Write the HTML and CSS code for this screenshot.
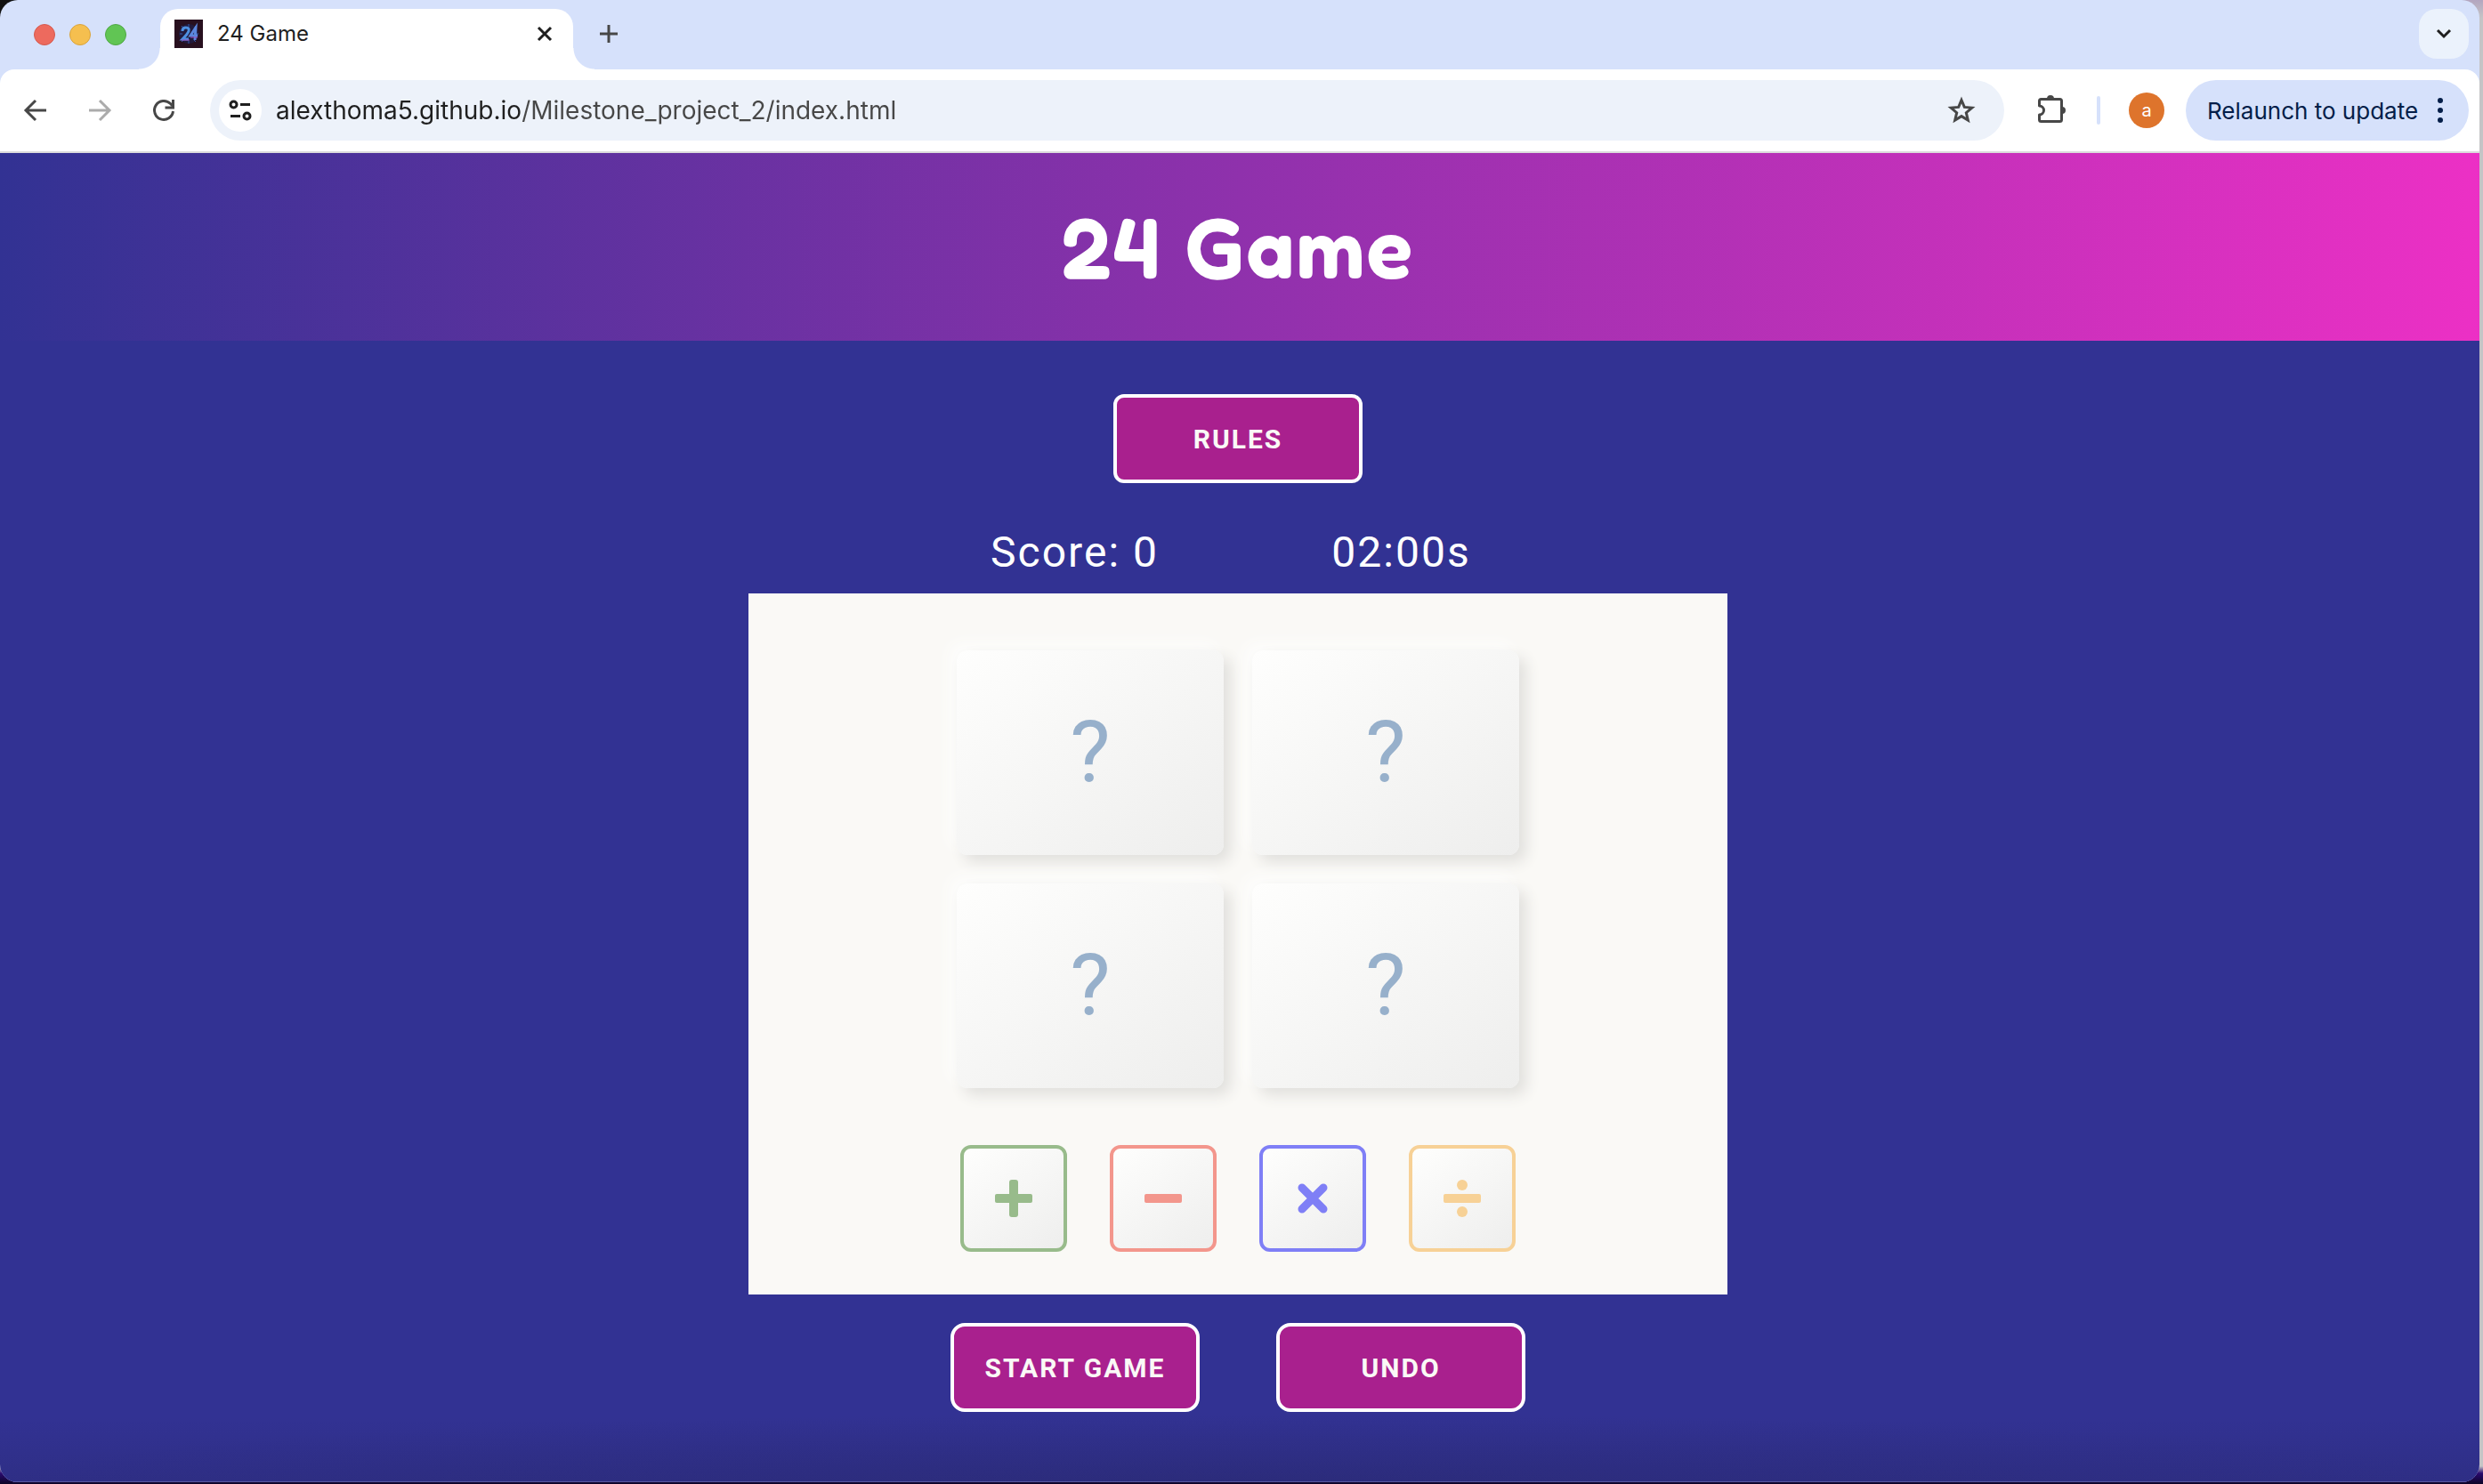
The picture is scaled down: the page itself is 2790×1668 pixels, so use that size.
FILE: index.html
```html
<!DOCTYPE html>
<html lang="en">
<head>
  <meta charset="utf-8">
  <meta name="viewport" content="width=device-width, initial-scale=1">
  <title>24 Game</title>
  <link rel="stylesheet" href="styles.css">
</head>
<body>
  <div class="window">
    <div class="tab-strip">
      <div class="lights">
        <button class="light light-close" type="button" aria-label="Close window"></button>
        <button class="light light-min" type="button" aria-label="Minimise window"></button>
        <button class="light light-max" type="button" aria-label="Maximise window"></button>
      </div>
      <div class="tab">
        <svg class="favicon" viewBox="0 0 32 32" aria-hidden="true">
          <rect width="32" height="32" fill="#28101f"/>
          <circle cx="16" cy="16" r="11" fill="#1c2354" opacity=".55"/>
          <path d="M16 5v3M16 24v3M6 16h3M24 16h3M8 7l2 3M24 7l-2 3M8 25l2-2M24 25l-2-2" stroke="#3558a8" fill="none"/>
          <path d="M9 13q0-4 4-4t3 4q-1 3-7 9h7" stroke="#4d8fe0" stroke-width="3" fill="none"/>
          <path d="M23 23l1-14-6 9h8" stroke="#5b86dc" stroke-width="3" fill="none"/>
          <path d="M8 23h9M18 20h8" stroke="#a44fc0" fill="none"/>
        </svg>
        <span class="tab-title">24 Game</span>
        <button class="icon-btn tab-close" type="button" aria-label="Close tab">
          <svg width="20" height="20" viewBox="0 0 20 20"><path d="M3 3l14 14M17 3L3 17" stroke="#1f1f1f" stroke-width="3" fill="none"/></svg>
        </button>
      </div>
      <button class="icon-btn new-tab" type="button" aria-label="New tab">
        <svg width="24" height="24" viewBox="0 0 24 24"><path d="M12 2v20M2 12h20" stroke="#474747" stroke-width="3" fill="none"/></svg>
      </button>
      <button class="icon-btn tab-search" type="button" aria-label="Search tabs">
        <svg width="20" height="20" viewBox="0 0 20 20"><path d="M3 6l7 7 7-7" stroke="#1f1f1f" stroke-width="3" fill="none"/></svg>
      </button>
    </div>

    <div class="toolbar">
      <div class="nav">
        <button class="icon-btn" type="button" aria-label="Back">
          <svg width="32" height="32" viewBox="0 0 32 32"><path d="M28 16H6M16 5L5 16l11 11" stroke="#474747" stroke-width="3" fill="none"/></svg>
        </button>
        <button class="icon-btn" type="button" aria-label="Forward">
          <svg width="32" height="32" viewBox="0 0 32 32"><path d="M4 16h22M16 5l11 11-11 11" stroke="#ababab" stroke-width="3" fill="none"/></svg>
        </button>
        <button class="icon-btn" type="button" aria-label="Reload">
          <svg width="32" height="32" viewBox="0 0 32 32"><path d="M26.500 17A10.500 10.500 0 1 1 23.500 8.500L26 11" stroke="#474747" stroke-width="3" fill="none"/><path d="M26.500 4v9h-9" stroke="#474747" stroke-width="3" fill="none"/></svg>
        </button>
      </div>
      <div class="omnibox">
        <button class="icon-btn site-info" type="button" aria-label="Site information">
          <svg width="28" height="28" viewBox="0 0 28 28" fill="none" stroke="#1f1f1f" stroke-width="3"><circle cx="6.500" cy="7.500" r="3.500"/><path d="M14 7.500h11M3 20.500h11"/><circle cx="21.500" cy="20.500" r="3.500"/></svg>
        </button>
        <input class="url" type="text" aria-label="Address" value="alexthoma5.github.io/Milestone_project_2/index.html">
        <button class="icon-btn" type="button" aria-label="Bookmark this tab">
          <svg width="32" height="32" viewBox="0 0 32 32"><path d="M16 4.500l3.300 7.900 8.500.7-6.500 5.600 2 8.300L16 22.600 8.700 27l2-8.300-6.500-5.600 8.500-.7z" stroke="#474747" stroke-width="3" fill="none"/></svg>
        </button>
      </div>
      <button class="icon-btn" type="button" aria-label="Extensions">
        <svg width="36" height="36" viewBox="0 0 36 36"><path d="M3.500 7.500q0-2 2-2h21q2 0 2 2v21q0 2-2 2h-21q-2 0-2-2v-5.500a5 5 0 0 0 0-10z" stroke="#474747" stroke-width="3" fill="none" stroke-linejoin="round"/><path d="M12 5a4 4 0 0 1 8 0zM29 14a4 4 0 0 1 0 8z" fill="#474747"/></svg>
      </button>
      <span class="divider"></span>
      <button class="avatar" type="button">a</button>
      <button class="relaunch" type="button">Relaunch to update
        <svg width="8" height="28" viewBox="0 0 8 28" fill="#041e49" aria-hidden="true"><circle cx="4" cy="3" r="3"/><circle cx="4" cy="14" r="3"/><circle cx="4" cy="25" r="3"/></svg>
      </button>
    </div>

    <div class="page">
      <header class="banner"><h1>24 Game</h1></header>
      <main class="game">
        <button class="btn btn-rules" type="button">RULES</button>
        <div class="stats">
          <span>Score: 0</span>
          <span>02:00s</span>
        </div>
        <section class="board" aria-label="Game board">
          <div class="cards">
            <button class="card" type="button">?</button>
            <button class="card" type="button">?</button>
            <button class="card" type="button">?</button>
            <button class="card" type="button">?</button>
          </div>
          <div class="operators">
            <button class="op op-add" type="button" aria-label="Add">
              <svg width="42" height="42" viewBox="0 0 42 42" fill="currentColor"><rect y="16" width="42" height="10" rx="2"/><rect x="16" width="10" height="42" rx="3"/></svg>
            </button>
            <button class="op op-sub" type="button" aria-label="Subtract">
              <svg width="42" height="42" viewBox="0 0 42 42" fill="currentColor"><rect y="16" width="42" height="10" rx="2"/></svg>
            </button>
            <button class="op op-mul" type="button" aria-label="Multiply">
              <svg width="42" height="42" viewBox="0 0 42 42"><path d="M9 9l24 24M33 9L9 33" stroke="currentColor" stroke-width="9" stroke-linecap="round" fill="none"/></svg>
            </button>
            <button class="op op-div" type="button" aria-label="Divide">
              <svg width="42" height="42" viewBox="0 0 42 42" fill="currentColor"><rect y="16" width="42" height="10" rx="2"/><circle cx="21" cy="6" r="6"/><circle cx="21" cy="36" r="6"/></svg>
            </button>
          </div>
        </section>
        <div class="actions">
          <button class="btn" type="button">START GAME</button>
          <button class="btn" type="button">UNDO</button>
        </div>
      </main>
    </div>
  </div>
</body>
</html>
```
FILE: styles.css
```css
* {
  box-sizing: border-box;
}

body {
  margin: 0;
  background:
    linear-gradient(#111, #111) 0 0 / 20px 20px no-repeat,
    linear-gradient(#b3a6c0, #c4c4c6 20px, #c4c4c6 calc(100% - 20px), #2a0a6e calc(100% - 12px), #0c0426);
  font-family: Inter, "Liberation Sans", sans-serif;
}

button {
  font: inherit;
  padding: 0;
  border: 0;
  background: none;
  flex: none;
}

.window {
  display: flex;
  flex-direction: column;
  min-height: calc(100vh - 2px);
  margin: 0 4px 2px 0;
  border-radius: 20px;
  overflow: hidden;
  background: #d6e1fb;
}

.icon-btn {
  display: grid;
  place-items: center;
}

/* Tab strip */

.tab-strip {
  display: flex;
  height: 78px;
  padding: 10px 12px 0 38px;
}

.lights {
  display: flex;
  align-items: center;
  gap: 16px;
  padding-bottom: 10px;
}

.light {
  width: 24px;
  height: 24px;
  border: 1px solid;
  border-radius: 50%;
}

.light-close {
  background: #ed6a5e;
  border-color: #d5594e;
}

.light-min {
  background: #f5bf4f;
  border-color: #d9a33c;
}

.light-max {
  background: #61c554;
  border-color: #50a845;
}

.tab {
  position: relative;
  display: flex;
  align-items: center;
  width: 464px;
  margin-left: 38px;
  padding: 0 22px 12px 16px;
  border-radius: 20px 20px 0 0;
  background: #fff;
}

.tab::before,
.tab::after {
  content: "";
  position: absolute;
  bottom: 0;
  width: 24px;
  height: 24px;
}

.tab::before {
  right: 100%;
  background: radial-gradient(circle at 0 0, transparent 23px, #fff 24px);
}

.tab::after {
  left: 100%;
  background: radial-gradient(circle at 100% 0, transparent 23px, #fff 24px);
}

.favicon {
  width: 32px;
  height: 32px;
}

.tab-title {
  flex: 1;
  margin-left: 16px;
  font-size: 24px;
  line-height: 32px;
  color: #1f1f1f;
}

.new-tab {
  height: 56px;
  margin-left: 28px;
}

.tab-search {
  width: 56px;
  height: 56px;
  margin-left: auto;
  border-radius: 20px;
  background: #ebf2fc;
}

/* Toolbar */

.toolbar {
  display: flex;
  align-items: center;
  height: 94px;
  padding: 0 12px 0 24px;
  border-bottom: 2px solid #dcdcdc;
  border-radius: 16px 16px 0 0;
  background: #fff;
}

.nav {
  display: flex;
  gap: 40px;
}

.omnibox {
  display: flex;
  align-items: center;
  flex: 1;
  height: 68px;
  margin: 0 36px;
  padding: 0 32px 0 10px;
  border-radius: 34px;
  background: #edf2fa;
}

.site-info {
  width: 48px;
  height: 48px;
  border-radius: 50%;
  background: #fff;
}

/* The host part of the address is darker than the path. */
.url {
  flex: 1;
  min-width: 0;
  height: 40px;
  margin-left: 16px;
  padding: 0;
  border: 0;
  font: 28px/40px Inter, "Liberation Sans", sans-serif;
  color: transparent;
  background: linear-gradient(90deg, #1f1f1f 276px, #474747 276px);
  -webkit-background-clip: text;
  background-clip: text;
}

.divider {
  width: 4px;
  height: 32px;
  margin: 0 32px;
  border-radius: 2px;
  background: #d6e1fb;
}

.avatar {
  width: 40px;
  height: 40px;
  border-radius: 50%;
  background: #de742c;
  color: #fff;
  font-size: 20px;
}

.relaunch {
  display: flex;
  align-items: center;
  justify-content: space-between;
  width: 318px;
  height: 68px;
  margin-left: 24px;
  padding: 0 28px 0 24px;
  border-radius: 34px;
  background: #d6e1fb;
  color: #041e49;
  font-size: 26px;
}

/* Game page */

.page {
  flex: 1;
  display: flex;
  flex-direction: column;
  padding-bottom: 76px;
  border-bottom: 1px solid #5a5aa0;
  background:
    radial-gradient(ellipse 52% 78px at 50% 100%, rgba(32, 32, 80, 0.2), transparent) no-repeat,
    linear-gradient(transparent calc(100% - 72px), rgba(32, 32, 80, 0.2)) no-repeat,
    #323293;
  font-family: Roboto, "Liberation Sans", sans-serif;
  color: #fff;
}

.banner {
  padding: 41px 4px 42px 0;
  background: linear-gradient(90deg, #323293, #ec30c5);
  text-align: center;
}

.banner h1 {
  margin: 0;
  font: 600 96px/128px "Fredoka One", Fredoka, Lato, sans-serif;
  letter-spacing: 2px;
}

.game {
  display: flex;
  flex-direction: column;
  align-items: center;
  padding: 60px 4px 0 0;
}

.btn {
  width: 280px;
  height: 100px;
  border: 4px solid #fff;
  border-radius: 16px;
  background: #a9208e;
  color: #faf9f6;
  font-size: 30px;
  font-weight: 700;
  letter-spacing: 2px;
}

.btn-rules {
  border-radius: 12px;
}

.stats {
  display: grid;
  grid-template-columns: 1fr 1fr;
  width: 734px;
  margin: 46px 0 14px;
  font-size: 48px;
  line-height: 64px;
  letter-spacing: 2px;
  text-align: center;
}

.board {
  display: flex;
  flex-direction: column;
  align-items: center;
  gap: 64px;
  width: 1100px;
  max-width: 100%;
  padding: 64px 0 48px;
  background: #faf9f6;
}

.cards {
  display: grid;
  grid-template-columns: 300px 300px;
  grid-auto-rows: 230px;
  gap: 32px;
}

.card {
  padding-bottom: 2px;
  border-radius: 12px;
  background: linear-gradient(145deg, #fefefd, #eeeeed);
  box-shadow: 8px 8px 16px #e1e0dd, -8px -8px 16px #fdfdfc;
  color: #97b0cb;
  font-size: 96px;
}

.operators {
  display: flex;
  gap: 48px;
}

.op {
  display: grid;
  place-items: center;
  width: 120px;
  height: 120px;
  border: 4px solid currentColor;
  border-radius: 12px;
  background: linear-gradient(145deg, #fefefd, #eeeeed);
}

.op-add {
  color: #98bb8b;
}

.op-sub {
  color: #f3968c;
}

.op-mul {
  color: #7f7ff6;
}

.op-div {
  color: #f7d196;
}

.actions {
  display: flex;
  gap: 86px;
  margin-top: 32px;
}
```
